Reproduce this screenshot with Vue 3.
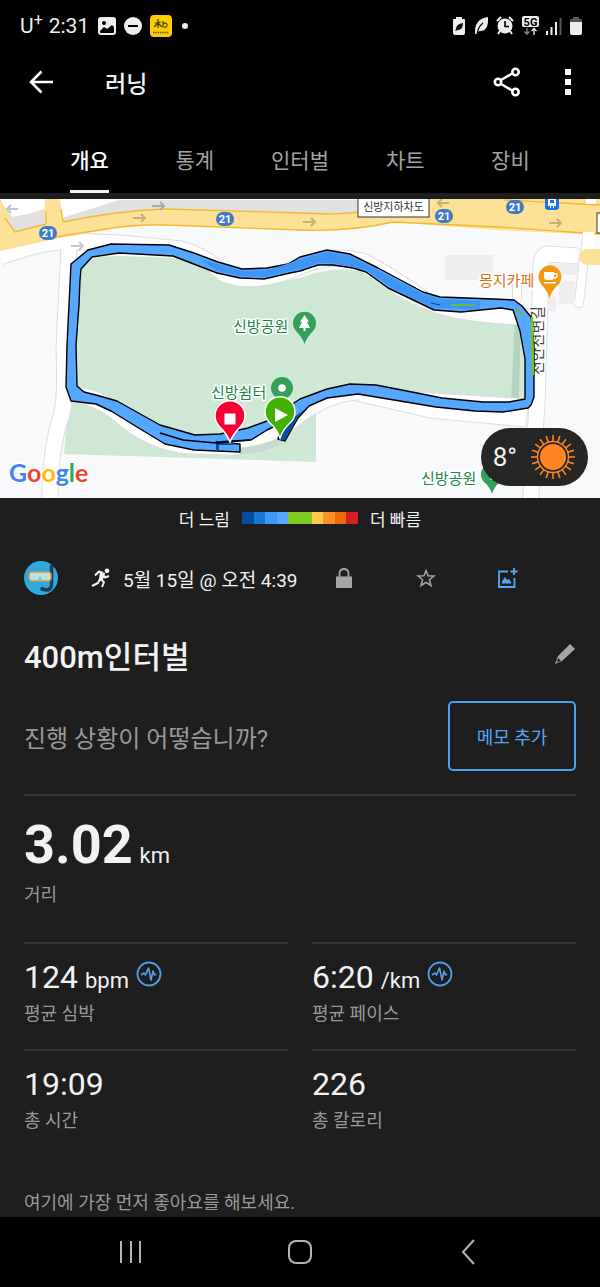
<script setup>
import { ref } from 'vue';

const tabs = ['개요', '통계', '인터벌', '차트', '장비'];
const activeTab = ref('개요');

const paceColors = [
  'navy',
  'blue',
  'azure',
  'sky',
  'green',
  'green',
  'yellow',
  'orange',
  'amber',
  'red'
];

const stats = [
  { label: '평균 심박', value: '124', unit: 'bpm', chart: true },
  { label: '평균 페이스', value: '6:20', unit: '/km', chart: true },
  { label: '총 시간', value: '19:09' },
  { label: '총 칼로리', value: '226' }
];

const roadBadges = [
  { x: 48, y: 34 },
  { x: 225, y: 20 },
  { x: 444, y: 17 },
  { x: 515, y: 8 }
];

const roadArrows = [
  { x: 133, y: 19, color: '#c9b078' },
  { x: 152, y: 7, color: '#a9a9b0' },
  { x: 71, y: 47, color: '#c3c6da' },
  { x: 303, y: 23, color: '#c9b078' },
  { x: 549, y: 24, color: '#c9b078' }
];

const sunRays = Array.from({ length: 20 }, (_, i) => i * 18);
</script>

<template>
  <div class="screen">
    <header class="top">
      <div class="status-bar">
        <span class="carrier">U<sup>+</sup></span>
        <span class="clock">2:31</span>
        <svg class="status-icon" width="18" height="18" viewBox="0 0 18 18">
          <rect width="18" height="18" rx="3" fill="#eee" />
          <circle cx="6" cy="6" r="2" fill="#000" />
          <path d="M2 14 L6 10 L9 12 L14 8 L16 10 V15 Q16 16 15 16 H3 Q2 16 2 15 Z" fill="#000" />
        </svg>
        <svg class="status-icon" width="18" height="18" viewBox="0 0 18 18">
          <circle cx="9" cy="9" r="9" fill="#eee" />
          <path d="M4 9 H14" stroke="#000" stroke-width="2" />
        </svg>
        <svg class="status-app" width="22" height="22" viewBox="0 0 22 22">
          <rect width="22" height="22" rx="4" fill="#ffcc00" />
          <path
            d="M5 8 L11 7 M8 4 V13 M8 8 L4 12 M8 8 L12 12 M13 6 V12 M13 9 Q17 7 17 10 Q17 13 13 12"
            fill="none"
            stroke="#4a3c12"
            stroke-width="1.2"
          />
          <path d="M3 17.5 H19" stroke="#6d5a14" stroke-width="1.6" stroke-dasharray="1.6 .7" />
        </svg>
        <i class="more-dot"></i>
        <svg class="status-right" width="132" height="20" viewBox="0 0 132 20">
          <path d="M4 3 V1 H10 V3 H12 Q13 3 13 4 V17 Q13 19 11 19 H3 Q1 19 1 17 V4 Q1 3 2 3 Z" fill="#eee" />
          <path d="M4 13 Q4 8 11 7 Q11 14 6 14 L3 15 Z" fill="#111" />
          <path d="M36 1 Q37 16 27 15 L25 18 L23 18 Q22 3 36 1 Z" fill="#eee" />
          <path d="M25 18 Q26 11 31 7" fill="none" stroke="#000" stroke-width="1.2" />
          <circle cx="53" cy="10" r="7.500" fill="#eee" />
          <path d="M45 5 L49 1 M57 1 L61 5 M48 15 L46 18 M58 15 L60 18" stroke="#eee" stroke-width="2" />
          <path d="M53 5 V10.500 H57" fill="none" stroke="#000" stroke-width="1.600" />
          <rect x="70" width="17" height="11" rx="2" fill="#eee" />
          <text x="78.500" y="9.500" class="network">5G</text>
          <path d="M75 12 V18 M72.500 15.500 L75 18 L77.500 15.500" fill="none" stroke="#888" stroke-width="1.300" />
          <path d="M82 19 V12.500 M79.500 15 L82 12.500 L84.500 15" fill="none" stroke="#eee" stroke-width="1.300" />
          <path d="M95 15 V19 M99.500 11 V19 M104 6 V19" stroke="#eee" stroke-width="2" />
          <path d="M108.500 2 V19" stroke="#555" stroke-width="2" />
          <path d="M121 3 V1 H127 V3 H129 Q130 3 130 4 V7 H118 V4 Q118 3 119 3 Z" fill="#555" />
          <path d="M118 6 H130 V17 Q130 19 128 19 H120 Q118 19 118 17 Z" fill="#eee" />
        </svg>
      </div>

      <div class="app-bar">
        <button type="button" class="icon-button" aria-label="뒤로">
          <svg width="26" height="26" viewBox="0 0 26 26">
            <path d="M25 13 H3 M13.500 2.500 L3 13 L13.500 23.500" fill="none" stroke="#fff" stroke-width="2.600" />
          </svg>
        </button>
        <h1>러닝</h1>
        <button type="button" class="icon-button share" aria-label="공유">
          <svg width="28" height="30" viewBox="0 0 28 30">
            <g fill="none" stroke="#fff" stroke-width="2.600">
              <path d="M8 13 L20 6 M8 17 L20 24" />
              <circle cx="5" cy="15" r="3.200" />
              <circle cx="22.500" cy="5" r="3.200" />
              <circle cx="22.500" cy="25" r="3.200" />
            </g>
          </svg>
        </button>
        <button type="button" class="icon-button" aria-label="메뉴">
          <svg width="8" height="28" viewBox="0 0 8 28">
            <path d="M1 1 h6 v6 h-6 z M1 11 h6 v6 h-6 z M1 21 h6 v6 h-6 z" fill="#fff" />
          </svg>
        </button>
      </div>

      <nav class="tabs">
        <button
          v-for="tab in tabs"
          :key="tab"
          type="button"
          class="tab"
          :class="{ active: tab === activeTab }"
          @click="activeTab = tab"
        >
          <span>{{ tab }}</span>
        </button>
      </nav>
    </header>

    <section class="map">
      <svg class="map-canvas" viewBox="0 0 600 299">
        <rect width="600" height="299" fill="#f8f9fb" />

        <!-- park -->
        <path d="M81 66 Q86 57 120 57 L175 59 Q205 67 235 84 Q262 88 300 79 Q340 64 366 75 Q410 108 440 114 Q480 121 525 121 V201 Q470 205 420 197 Q370 182 330 191 L316 199 V263 L64 255 Z" fill="#cfe8d6" />
        <path d="M515 120 H521 L519 200 L511 203 Z" fill="#b2d3bf" />

        <!-- footpaths -->
        <path d="M309 214 Q330 200 352 201 Q400 212 430 219 L525 228 L530 200 L400 192 L340 188 Z" fill="#fff" stroke="#dcdde2" />
        <g fill="none" stroke-linejoin="round">
          <g stroke="#dcdde2" stroke-width="17">
            <path d="M50 300 Q50 250 61 218 Q66 200 64 150 L69 48" />
            <path d="M0 58 Q50 40 75 43 Q105 41 180 50 Q205 56 224 75 Q250 86 290 72 Q330 52 365 63 Q400 82 426 102 Q460 117 530 118" />
            <path d="M72 196 Q93 195 119 215 Q150 244 190 247 L235 248 Q265 245 295 219 Q330 193 360 193" />
            <path d="M530 310 L537 205 L541 65 Q542 55 549 55 L578 57" />
          </g>
          <g stroke="#dcdde2" stroke-width="10" stroke-linecap="round">
            <path d="M588 36 L584 60 L579 104 M517 100 V84" />
          </g>
          <g stroke="#fff" stroke-width="15">
            <path d="M50 300 Q50 250 61 218 Q66 200 64 150 L69 48" />
            <path d="M0 58 Q50 40 75 43 Q105 41 180 50 Q205 56 224 75 Q250 86 290 72 Q330 52 365 63 Q400 82 426 102 Q460 117 530 118" />
            <path d="M72 196 Q93 195 119 215 Q150 244 190 247 L235 248 Q265 245 295 219 Q330 193 360 193" />
            <path d="M530 310 L537 205 L541 65 Q542 55 549 55 L578 57" />
          </g>
          <g stroke="#fff" stroke-width="8" stroke-linecap="round">
            <path d="M588 36 L584 60 L579 104 M517 100 V84" />
          </g>
        </g>
        <path d="M240 252 Q264 250 280 242" fill="none" stroke="#c6dbcf" stroke-width="7" />

        <!-- buildings -->
        <path d="M445 56 h48 v25 h-48 z M549 65 h29 v11 h-29 z M559 82 h16 v23 h-16 z M547 98 h9 v14 h-9 z" fill="#eee" />

        <!-- main road -->
        <path d="M0 0 H600 V36 L498 31 L393 23 Q350 33 300 31 L165 26 Q120 27 65 38 L0 52 Z" fill="#fde197" />
        <path d="M0 0 H45 V10 L13 19 L4 7 Z M60 0 H358 V12 Q340 16 300 14 L165 10 Q115 12 63 23 Z" fill="#fff" />
        <path d="M6 19 L46 12 V26 L15 33 Z" fill="#e1e1e1" />
        <path d="M62 19 L119 1 H358 V13 Q340 16 300 14 L165 10 Q115 12 63 23 Z" fill="#e1e1e1" />
        <path
          d="M5 19 L15 33 L46 25 V12 M61 10 L63 23 Q115 12 165 10 L300 14 Q340 16 358 13 M48 39 L100 31 Q130 25 165 26 L300 31 Q350 33 393 23 L498 28 L600 35 M504 1 L600 6"
          fill="none"
          stroke="#f3b92f"
          stroke-width="1.300"
        />
        <path d="M586 0 h10 v5 h-10 z M583 33 h11 v17 h-11 z" fill="#fff" />
        <path d="M600 50 H587 Q580 51 579 58 Q580 65 588 66 H600 Z" fill="#fde197" />

        <path
          v-for="arrow in roadArrows"
          :key="arrow.x"
          :transform="`translate(${arrow.x} ${arrow.y})`"
          d="M0 0 H12 M8 -4 L12 0 L8 4"
          fill="none"
          :stroke="arrow.color"
          stroke-width="2"
        />
        <path d="M18 10 H7 M11 6 L7 10 L11 14" fill="none" stroke="#bfc2d6" stroke-width="2" />
        <path d="M449 4 H438 M442 0 L438 4 L442 8" fill="none" stroke="#c9b078" stroke-width="2" />

        <g v-for="badge in roadBadges" :key="badge.x">
          <rect :x="badge.x - 9" :y="badge.y - 7" width="18" height="14" rx="7" fill="#3f7bc4" />
          <text :x="badge.x" :y="badge.y + 4" class="badge-text">21</text>
        </g>

        <rect x="358" y="-1" width="71" height="19" fill="#fff" stroke="#333" />
        <text x="393.500" y="12" class="road-name">신방지하차도</text>
        <rect x="597" y="14" width="8" height="20" fill="#fff" stroke="#333" />
        <path d="M545 0 H559 V8 Q559 11 556 11 H548 Q545 11 545 8 Z" fill="#1a73e8" />
        <path d="M548 0 H556 V7 H554 V9 H553 V7 H551 V9 H550 V7 H548 Z" fill="#fff" />
        <path d="M550 1 H554 V4 H550 Z" fill="#1a73e8" />

        <text x="-176" y="543" transform="rotate(-90)" class="street-name">천안천변길</text>

        <!-- recorded route -->
        <path
          d="M71 65 L88 51 L111 45 L169 46 L194 54 L218 63 L242 70 L267 69 L288 65 L300 58 L327 51 L350 55 L378 69 L423 93 L440 98 L493 100 L514 101 L522 107 L531 118 L534 146 V198 L531 206 L528 209 L503 213 L475 212 L436 208 L358 195 L327 199 L309 207 L298 219 L285 242 L278 240 L283 223 L267 231 L251 241 L216 243 L240 245 V253 L194 251 L165 245 L137 228 L111 212 L96 205 L71 202 L66 188 L67 146 Z M81 70 L80 81 L79 106 L76 146 L77 187 L84 193 L96 196 L117 202 L160 226 L195 236 L220 235 L248 229 L267 222 L300 200 L327 190 L350 185 L376 186 L417 194 L442 199 L483 203 L509 203 L525 200 V160 L520 132 L513 111 L501 109 L461 113 L434 111 L407 98 L388 89 L366 73 L353 69 L333 66 L318 66 L300 72 L290 74 L264 80 L240 79 L217 74 L173 57 L119 54 L92 58 Z"
          fill="#55a7ff"
          fill-rule="evenodd"
          stroke="#000"
          stroke-width="1.400"
          stroke-linejoin="round"
        />
        <path d="M200 60 L242 72 L268 71 L302 60 L327 53 L350 57 L423 95 L440 100 L480 102 V110 L434 109 L408 97 L389 87 L366 71 L333 64 L318 64 L300 70 L264 78 L240 77 L218 72 Z" fill="#3e95f5" />
        <path d="M309 207 L299 216 L285 241 L280 241 L285 225 Z M218 242 L234 244 L233 246 L219 246 L219 252 L216 252 V244 Z" fill="#0c4c9c" />
        <path d="M160 234 L183 241 L216 244 L250 241" fill="none" stroke="#000" stroke-width="1.500" />
        <path d="M451 106 H475 M516 110 L523 117" stroke="#6dbb39" stroke-width="2" />
        <path d="M532 118 L533 176" stroke="#76c51b" stroke-width="2.500" />
        <path d="M431 104 L440 106" stroke="#123f77" stroke-width="1" />

        <!-- places -->
        <text x="233" y="133" class="place">신방공원</text>
        <text x="211" y="199" class="place">신방쉼터</text>
        <text x="421" y="285" class="place">신방공원</text>
        <text x="479" y="87" class="place cafe">몽지카페</text>

        <path d="M304.500 145 Q302 138 296 132 A11.500 11.500 0 1 1 313 132 Q307 138 304.500 145 Z" fill="#34a05a" />
        <path d="M304.500 116 L309 123 H307 L310 129 H305.500 V132 H303.500 V129 H299 L302 123 H300 Z" fill="#fff" />
        <path d="M492 295 Q490 288 484 283 A11 11 0 1 1 500 283 Q494 288 492 295 Z" fill="#34a05a" />
        <path d="M490 279 L493 276 L495 281 H491 Z" fill="#fff" />
        <path d="M549.500 99 Q547 91 541 85 A11.500 11.500 0 1 1 559 85 Q552 91 549.500 99 Z" fill="#f39a0a" />
        <path d="M544 73 H554 V78 Q554 81 551 81 H547 Q544 81 544 78 Z M544 83 H556 V84.500 H544 Z" fill="#fff" />
        <path d="M554 75 H557 Q558 79 554 79" fill="none" stroke="#fff" stroke-width="1.300" />

        <circle cx="282" cy="189" r="11" fill="#34a05a" />
        <circle cx="282" cy="189" r="3.800" fill="#fff" />
        <path d="M230 243 Q227 235 219 227 A15 15 0 1 1 241 227 Q233 235 230 243 Z" fill="#f90034" stroke="#fff" stroke-width="1.500" />
        <rect x="224.500" y="214.500" width="11" height="11" fill="#fff" />
        <path d="M280 239 Q277 230 269 223 A15 15 0 1 1 291 223 Q283 230 280 239 Z" fill="#43b100" stroke="#fff" stroke-width="1.500" />
        <path d="M275 209 L288 216 L275 223 Z" fill="#fff" />

        <text x="9" y="283" class="google">
          <tspan fill="#4285f4">G</tspan><tspan fill="#ea4335">o</tspan><tspan fill="#fbbc05">o</tspan><tspan fill="#4285f4">g</tspan><tspan fill="#34a853">l</tspan><tspan fill="#ea4335">e</tspan>
        </text>
      </svg>

      <div class="weather">
        <span>8°</span>
        <svg width="46" height="46" viewBox="-23 -23 46 46">
          <circle r="13" fill="#ff8620" />
          <circle r="15.500" fill="none" stroke="#ff8620" stroke-width="1.400" />
          <path
            v-for="angle in sunRays"
            :key="angle"
            d="M0 -15 V-22"
            :transform="`rotate(${angle})`"
            stroke="#ff8620"
            stroke-width="1.600"
          />
        </svg>
      </div>
    </section>

    <div class="legend">
      <span>더 느림</span>
      <div class="scale">
        <i v-for="(color, i) in paceColors" :key="i" :class="color"></i>
      </div>
      <span>더 빠름</span>
    </div>

    <main class="content">
      <div class="meta">
        <svg class="avatar" width="34" height="34" viewBox="0 0 34 34">
          <circle cx="17" cy="17" r="17" fill="#2eaae1" />
          <path d="M27.500 5 V24 Q27 29 22 29 L18 28" fill="none" stroke="#1e3f5c" stroke-width="3.500" stroke-linecap="round" />
          <path d="M18 26 Q19 30 25 28" fill="none" stroke="#1e3f5c" stroke-width="2" />
          <rect x="5" y="11" width="22" height="9" rx="3" fill="#bce3e4" stroke="#e39331" stroke-width="1.300" />
          <path d="M13 20 L16 15 L19 20" fill="#7fc4dc" />
        </svg>
        <svg class="runner" width="20" height="20" viewBox="0 0 20 20">
          <circle cx="16" cy="2.800" r="2.400" fill="#f2f2f2" />
          <path
            d="M12 5 L8 3.500 L4 7.500 M12 6 L9 11 L13 14 L11 19 M9 11 L7 15 L1 18 M12 6 L14 9.500 L18 8"
            fill="none"
            stroke="#f2f2f2"
            stroke-width="2"
            stroke-linejoin="round"
          />
          <path d="M9 4 L14 5 L12 12 L8 11 Z" fill="#f2f2f2" />
        </svg>
        <time>5월 15일 @ 오전 4:39</time>
        <div class="actions">
          <button type="button" aria-label="비공개">
            <svg width="16" height="20" viewBox="0 0 16 20">
              <rect y="8.500" width="16" height="11.500" fill="#a5a5a5" />
              <path d="M3.500 9 V5 Q4 1 8 1 Q12 1 12.500 5 V9" fill="none" stroke="#a5a5a5" stroke-width="1.800" />
            </svg>
          </button>
          <button type="button" aria-label="즐겨찾기">
            <svg width="20" height="20" viewBox="0 0 20 20">
              <path
                d="M10 2.500 L12 7.800 L18 8 L13.400 11.700 L15 17.500 L10 14.300 L5 17.500 L6.600 11.700 L2 8 L8 7.800 Z"
                fill="none"
                stroke="#a5a5a5"
                stroke-width="1.500"
              />
            </svg>
          </button>
          <button type="button" aria-label="사진 추가">
            <svg width="20" height="22" viewBox="0 0 20 22">
              <path d="M10 4.500 H1 V20 H16.500 V11" fill="none" stroke="#55a7f5" stroke-width="1.800" />
              <path d="M16 1 V8 M12.500 4.500 H19.500" stroke="#55a7f5" stroke-width="1.800" />
              <path d="M4 16.500 V14.500 L7 10 L9 13 L11 12 L13 15 V16.500 Z" fill="#55a7f5" />
            </svg>
          </button>
        </div>
      </div>

      <div class="title-row">
        <h2>400m인터벌</h2>
        <button type="button" aria-label="이름 편집">
          <svg width="22" height="22" viewBox="0 0 22 22">
            <path d="M16 1 L21 6 L8 18 L1 21 L4 13 Z" fill="#a5a5a5" />
            <path d="M4 15 L7 18 L3 19 Z" fill="#1e1e1e" />
          </svg>
        </button>
      </div>

      <div class="memo">
        <p>진행 상황이 어떻습니까?</p>
        <button type="button">메모 추가</button>
      </div>

      <section class="distance">
        <p class="value big"><strong>3.02</strong><span class="unit">km</span></p>
        <p class="label">거리</p>
      </section>

      <section class="stats">
        <article v-for="stat in stats" :key="stat.label" class="stat">
          <p class="value">
            {{ stat.value }}
            <span v-if="stat.unit" class="unit">{{ stat.unit }}</span>
            <svg v-if="stat.chart" width="26" height="26" viewBox="0 0 26 26">
              <circle cx="13" cy="13" r="11.500" fill="none" stroke="#4f9fee" stroke-width="1.800" />
              <path
                d="M5 14 L8 12 L9.500 14 L12.500 7 L15 19 L17 10 L18.500 14 L20 13"
                fill="none"
                stroke="#4f9fee"
                stroke-width="1.600"
                stroke-linejoin="round"
              />
            </svg>
          </p>
          <p class="label">{{ stat.label }}</p>
        </article>
      </section>

      <p class="likes">여기에 가장 먼저 좋아요를 해보세요.</p>
    </main>

    <nav class="system-nav">
      <button type="button" aria-label="최근 앱">
        <svg width="24" height="26" viewBox="0 0 24 26">
          <path d="M2 2 V24 M12 2 V24 M21 2 V24" stroke="#b5b5b5" stroke-width="2" />
        </svg>
      </button>
      <button type="button" aria-label="홈">
        <svg width="24" height="26" viewBox="0 0 24 26">
          <rect x="1" y="2" width="22" height="22" rx="7" fill="none" stroke="#b5b5b5" stroke-width="2" />
        </svg>
      </button>
      <button type="button" aria-label="이전">
        <svg width="24" height="26" viewBox="0 0 24 26">
          <path d="M17 1 L6 13 L17 25" fill="none" stroke="#b5b5b5" stroke-width="2" />
        </svg>
      </button>
    </nav>
  </div>
</template>

<style>
body {
  background: #1e1e1e;
}
</style>

<style scoped>
.screen {
  min-height: 100vh;
  display: flex;
  flex-direction: column;
  background: #1e1e1e;
  color: #f2f2f2;
  font-family: Roboto, "Noto Sans CJK KR", sans-serif;
}

h1,
h2,
p {
  margin: 0;
}

svg {
  display: block;
  flex: none;
}

button {
  display: flex;
  align-items: center;
  justify-content: center;
  padding: 0;
  border: none;
  background: none;
  color: inherit;
  font: inherit;
}

.top {
  background: #000;
}

.status-bar {
  height: 52px;
  padding: 0 16px 0 20px;
  display: flex;
  align-items: center;
  color: #eee;
  font-size: 21px;
  line-height: 24px;
}

.carrier sup {
  font-size: 16px;
  line-height: 1px;
}

.clock {
  margin: 0 9px 0 6px;
}

.status-icon {
  margin-right: 8px;
}

.more-dot {
  width: 6px;
  height: 6px;
  margin-left: 10px;
  border-radius: 50%;
  background: #eee;
}

.status-right {
  margin-left: auto;
}

.network {
  font-size: 11px;
  font-weight: 700;
  text-anchor: middle;
  fill: #000;
}

.app-bar {
  height: 60px;
  padding: 0 28px;
  display: flex;
  align-items: center;
}

.app-bar h1 {
  padding-top: 5px;
  margin-left: 51px;
  font-size: 23px;
  font-weight: 500;
  line-height: 32px;
}

.share {
  margin: 0 43px 0 auto;
}

.tabs {
  padding: 15px 37px 0;
  display: grid;
  grid-template-columns: repeat(5, 1fr);
}

.tab {
  color: #a3a3a3;
  font-size: 21px;
  line-height: 32px;
}

.tab span {
  padding: 18px 0 13px;
  border-bottom: 3px solid transparent;
}

.tab.active {
  color: #fff;
  font-weight: 500;
}

.tab.active span {
  border-color: #f2f2f2;
}

.map {
  position: relative;
  margin-top: 6px;
}

.map-canvas {
  width: 100%;
  height: auto;
}

.badge-text {
  font-size: 11px;
  font-weight: 700;
  text-anchor: middle;
  fill: #fff;
}

.road-name {
  font-size: 11px;
  text-anchor: middle;
  fill: #333;
}

.street-name {
  font-size: 15px;
  fill: #444;
}

.place {
  font-size: 15px;
  fill: #26834b;
  stroke: #fff;
  stroke-width: 3px;
  stroke-linejoin: round;
  paint-order: stroke;
}

.place.cafe {
  fill: #d47512;
}

.google {
  font-family: Lato, sans-serif;
  font-size: 25px;
  font-weight: 700;
  stroke: #fff;
  stroke-width: 3px;
  paint-order: stroke;
}

.weather {
  position: absolute;
  right: 12px;
  bottom: 12px;
  height: 58px;
  padding: 0 12px;
  display: flex;
  align-items: center;
  gap: 13px;
  border-radius: 29px;
  background: #262626;
  font-size: 26px;
}

.legend {
  height: 40px;
  display: flex;
  align-items: center;
  justify-content: center;
  gap: 12px;
  font-size: 17px;
}

.scale {
  width: 116px;
  height: 12px;
  display: flex;
}

.scale i {
  flex: 1;
}

.navy {
  background: #024ea4;
}

.blue {
  background: #1976d2;
}

.azure {
  background: #3e98f8;
}

.sky {
  background: #56a8ff;
}

.green {
  background: #80c91e;
}

.yellow {
  background: #ffcc4a;
}

.orange {
  background: #ff8d29;
}

.amber {
  background: #ee690c;
}

.red {
  background: #d52020;
}

.content {
  flex: 1;
  padding: 0 24px;
}

.meta {
  height: 80px;
  display: flex;
  align-items: center;
}

.runner {
  margin: 0 12px 0 33px;
}

.meta time {
  font-size: 19px;
}

.actions {
  margin: 0 27px 0 auto;
  display: flex;
}

.actions button {
  width: 82px;
}

.title-row {
  height: 72px;
  display: flex;
  align-items: center;
  justify-content: space-between;
}

.title-row h2 {
  font-size: 31px;
  font-weight: 500;
}

.memo {
  padding: 11px 0 23px;
  display: flex;
  align-items: center;
  justify-content: space-between;
  border-bottom: 2px solid #363636;
}

.memo p {
  color: #999;
  font-size: 24px;
}

.memo button {
  width: 128px;
  height: 70px;
  border: 2px solid #4f9fee;
  border-radius: 5px;
  color: #55a7f5;
  font-size: 18px;
}

.value {
  height: 40px;
  padding-top: 13px;
  display: flex;
  align-items: baseline;
  gap: 7px;
  font-size: 32px;
  line-height: 40px;
}

.value svg {
  align-self: flex-start;
  margin-top: 4px;
}

.unit {
  font-size: 22px;
}

.label {
  padding-top: 3px;
  color: #999;
  font-size: 18px;
  line-height: 28px;
}

.distance {
  height: 146px;
}

.value.big {
  height: 66px;
  padding-top: 16px;
  line-height: 66px;
}

.big strong {
  font-size: 54px;
}

.stats {
  display: grid;
  grid-template-columns: 1fr 1fr;
  column-gap: 24px;
}

.stat {
  height: 105px;
  border-top: 2px solid #363636;
}

.likes {
  padding-top: 33px;
  color: #999;
  font-size: 18px;
  line-height: 28px;
}

.system-nav {
  height: 70px;
  padding: 0 47px;
  display: grid;
  grid-template-columns: repeat(3, 1fr);
  background: #000;
}
</style>
